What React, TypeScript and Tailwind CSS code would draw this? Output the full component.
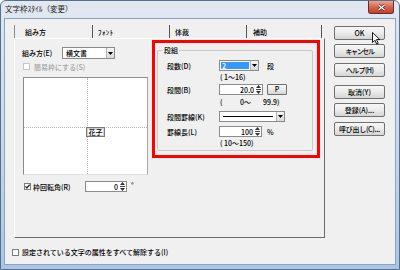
import React from 'react';

function Checkbox({ checked = false, disabled = false }: { checked?: boolean; disabled?: boolean }) {
  return (
    <span
      className={`flex h-[7px] w-[7px] shrink-0 items-center justify-center border bg-white ${
        disabled ? 'border-[#c6c6c6]' : 'border-[#7d7d7d]'
      }`}
    >
      {checked && (
        <svg width="5" height="5" viewBox="0 0 5 5">
          <path d="M0.4 2.4L1.9 4L4.6 0.7" fill="none" stroke="#1e1e1e" strokeWidth="1.2" />
        </svg>
      )}
    </span>
  );
}

function DropBtn() {
  return (
    <span className="flex h-full w-[8px] shrink-0 items-center justify-center border-l border-[#b4b4b4] bg-gradient-to-b from-[#f6f6f6] to-[#d9d9d9]">
      <svg width="5" height="3" viewBox="0 0 5 3">
        <path d="M0 0h5L2.5 3z" fill="#000" />
      </svg>
    </span>
  );
}

function Spinner() {
  return (
    <span className="flex h-full w-[7px] shrink-0 flex-col items-center justify-center gap-[1px]">
      <svg width="5" height="3" viewBox="0 0 5 3">
        <path d="M2.5 0L5 3H0z" fill="#333" />
      </svg>
      <span className="h-px w-[5px] bg-[#444]" />
      <svg width="5" height="3" viewBox="0 0 5 3">
        <path d="M0 0h5L2.5 3z" fill="#333" />
      </svg>
    </span>
  );
}

function Btn({ children, className = '' }: { children: React.ReactNode; className?: string }) {
  return (
    <div
      className={`flex h-[14px] w-[51px] items-center justify-center rounded-[2px] border border-[#707070] bg-gradient-to-b from-[#f7f7f7] via-[#ebebeb] to-[#d5d5d5] leading-none ${className}`}
    >
      {children}
    </div>
  );
}

export default function App() {
  return (
    <div className="relative h-[270px] w-[400px] overflow-hidden rounded-t-[6px] border border-[#546f90] bg-gradient-to-b from-[#e1e8f0] via-[#cad9ea] to-[#abc5e2] font-['Noto_Sans_CJK_JP',sans-serif] text-[7px] font-medium leading-[8px] text-black">
      {/* title bar */}
      <div className="flex h-[18px] items-start justify-between pl-[4px] pr-[5px]">
        <span className="mt-[4px] text-[7.5px] font-normal leading-[8px] text-[#1a1a1a]">文字枠ｽﾀｲﾙ（変更）</span>
        <span className="flex h-[13px] w-[26px] items-center justify-center rounded-b-[3px] border border-t-0 border-[#6e2b22] bg-gradient-to-b from-[#eca493] via-[#d4654f] to-[#bf422c]">
          <svg width="9" height="7" viewBox="0 0 9 7">
            <path d="M1.5 1L7.5 6M7.5 1L1.5 6" stroke="#5a1a12" strokeWidth="2.6" />
            <path d="M1.5 1L7.5 6M7.5 1L1.5 6" stroke="#fff" strokeWidth="1.4" />
          </svg>
        </span>
      </div>

      {/* client area */}
      <div className="mx-[4px] flex h-[245px] flex-col bg-[#f0f0f0] shadow-[0_0_0_1px_#8aa3c0]">
        <div className="flex">
          <div className="ml-[9px] mt-[6px] w-[311px]">
            {/* tabs */}
            <div className="flex h-[13px] items-stretch">
              <div className="flex w-[79px] items-center border-l border-r border-l-[#8a8a8a] border-r-[#555] pl-[10px] pt-[1px]">組み方</div>
              <div className="flex w-[77px] items-center border-r border-[#555] pl-[5px] pt-[1px] tracking-[0.4px]">ﾌｫﾝﾄ</div>
              <div className="flex w-[77px] items-center border-r border-[#555] pl-[5px] pt-[1px]">体裁</div>
              <div className="flex w-[75px] items-center border-r border-[#555] pl-[6px] pt-[1px]">補助</div>
            </div>

            {/* panel */}
            <div className="flex h-[200px] items-start border border-white border-b-[#6a6a6a] border-r-[#6a6a6a]">
              <div className="flex w-[137px] flex-col pl-[7px] pt-[8px]">
                <div className="flex h-[12px] items-center">
                  <span className="w-[40px]">組み方(E)</span>
                  <div className="flex h-full w-[53px] border border-[#8b8b8b] bg-white">
                    <span className="flex flex-1 items-center pl-[3px]">横文書</span>
                    <DropBtn />
                  </div>
                </div>
                <div className="mt-[4px] flex h-[7px] items-center gap-[4px] pl-[1px] text-[#a3a3a3]">
                  <Checkbox disabled />
                  <span>簡易枠にする(S)</span>
                </div>
                <div className="relative ml-[1px] mt-[7px] h-[98px] w-[125px] border border-[#8c8c8c] border-b-[#e2e2e2] border-r-[#a8a8a8] bg-white">
                  <div className="absolute bottom-0 left-[63px] top-0 border-l border-dotted border-[#b5b5b5]" />
                  <div className="absolute left-0 right-0 top-[49px] border-t border-dotted border-[#b5b5b5]" />
                  <div className="absolute left-[62px] top-[49px] flex h-[10px] w-[19px] items-center justify-center border border-[#7a7a7a] bg-white shadow-[inset_0_0_0_1px_#d0d0d0]">
                    花子
                  </div>
                </div>
                <div className="mt-[6px] flex h-[11px] items-center pl-[2px]">
                  <Checkbox checked />
                  <span className="ml-[2px] w-[52px]">枠回転角(R)</span>
                  <div className="flex h-full w-[42px] border border-[#8b8b8b] bg-white">
                    <span className="flex flex-1 items-center justify-end pr-[1px]">0</span>
                    <Spinner />
                  </div>
                  <span className="ml-[4px] self-start">°</span>
                </div>
              </div>

              {/* highlighted column group */}
              <div className="mt-[1px] h-[118px] w-[168px] border-[3px] border-[#ff0000] pl-[2px] pr-[4px] pt-[7px]">
                <div className="relative h-[101px] rounded-[2px] border border-[#c9c9c9] pl-[9px] pt-[9px]">
                  <span className="absolute -top-[5px] left-[5px] bg-[#f0f0f0] px-[1px]">段組</span>

                  <div className="flex h-[11px] items-center">
                    <span className="w-[52px]">段数(D)</span>
                    <div className="flex h-full w-[40px] border border-[#8b8b8b] bg-white">
                      <span className="flex flex-1 items-center p-[1px]">
                        <span className="flex h-full w-full items-center bg-[#3399ff] pl-[1px] text-white">2</span>
                      </span>
                      <DropBtn />
                    </div>
                    <span className="ml-[8px]">段</span>
                  </div>
                  <div className="mt-[2px] h-[8px] pl-[53px]">( 1～16)</div>

                  <div className="mt-[3px] flex h-[11px] items-center">
                    <span className="w-[52px]">段間(B)</span>
                    <div className="flex h-full w-[44px] border border-[#8b8b8b] bg-white">
                      <span className="flex flex-1 items-center justify-end pr-[1px]">20.0</span>
                      <Spinner />
                    </div>
                    <Btn className="ml-[4px] !w-[20px] !h-[11px] !rounded-[1px]">P</Btn>
                  </div>
                  <div className="mt-[3px] flex h-[8px] pl-[53px]">
                    <span className="w-[20px]">(</span>
                    <span className="w-[23px]">0～</span>
                    <span>99.9)</span>
                  </div>

                  <div className="mt-[5px] flex h-[11px] items-center">
                    <span className="w-[52px]">段間罫線(K)</span>
                    <div className="flex h-full w-[66px] border border-[#8b8b8b] bg-white">
                      <span className="flex flex-1 items-center px-[3px]">
                        <span className="h-px w-full bg-black" />
                      </span>
                      <DropBtn />
                    </div>
                  </div>

                  <div className="mt-[4px] flex h-[11px] items-center">
                    <span className="w-[52px]">罫線長(L)</span>
                    <div className="flex h-full w-[43px] border border-[#8b8b8b] bg-white">
                      <span className="flex flex-1 items-center justify-end pr-[1px]">100</span>
                      <Spinner />
                    </div>
                    <span className="ml-[5px]">%</span>
                  </div>
                  <div className="mt-[2px] h-[8px] pl-[53px]">( 10～150)</div>
                </div>
              </div>
            </div>
          </div>

          {/* right buttons */}
          <div className="ml-[9px] mt-[7px] flex w-[51px] flex-col">
            <Btn>OK</Btn>
            <Btn className="mt-[4px] tracking-[-1.4px]">キャンセル</Btn>
            <Btn className="mt-[5px] tracking-[-0.6px]">ヘルプ(H)</Btn>
            <Btn className="mt-[8px]">取消(Y)</Btn>
            <Btn className="mt-[4px]">登録(A)...</Btn>
            <Btn className="mt-[5px] tracking-[-0.3px]">呼び出し(C)...</Btn>
          </div>
        </div>

        <div className="ml-[7px] mt-[10px] flex h-[8px] items-center gap-[3px]">
          <Checkbox />
          <span>設定されている文字の属性をすべて解除する(I)</span>
        </div>
      </div>

      {/* mouse pointer over OK */}
      <svg className="absolute left-[371px] top-[31px]" width="9" height="13" viewBox="0 0 9 13">
        <path d="M0.5 0.5V10.5L2.9 8.2L4.6 12L6.2 11.3L4.5 7.6H7.8Z" fill="#fff" stroke="#000" strokeWidth="0.9" strokeLinejoin="round" />
      </svg>
    </div>
  );
}
